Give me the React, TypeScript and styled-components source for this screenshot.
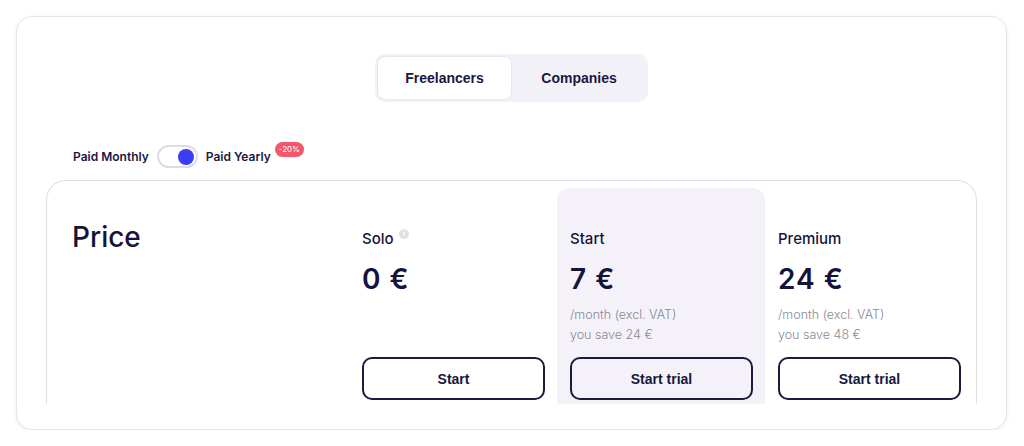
import React from "react";
import styled, { createGlobalStyle } from "styled-components";

const Global = createGlobalStyle`
  html, body { margin: 0; padding: 0; background: #ffffff; }
  body { font-family: Inter, "Noto Sans", sans-serif; color: #16133a; }
  * { box-sizing: border-box; }
`;

const Card = styled.div`
  margin: 16px 17px 0 16px;
  height: 414px;
  border: 1px solid #e6e6ea;
  border-radius: 16px;
  box-shadow: 0 1px 4px rgba(20, 20, 40, 0.07);
  padding: 37px 29px 25px 29px;
  display: flex;
  flex-direction: column;
  background: #fff;
`;

const TabsRow = styled.div`
  display: flex;
  justify-content: center;
`;

const Tabs = styled.div`
  display: flex;
  background: #f3f1f8;
  border-radius: 10px;
  padding: 2px;
  height: 48px;
`;

const Tab = styled.button<{ $active?: boolean }>`
  width: ${(p) => (p.$active ? 135 : 134)}px;
  height: 44px;
  border-radius: 8px;
  border: 1px solid ${(p) => (p.$active ? "#e7e5ee" : "transparent")};
  background: ${(p) => (p.$active ? "#ffffff" : "transparent")};
  font-family: "Liberation Sans", Arial, sans-serif;
  font-weight: 700;
  font-size: 14px;
  color: #1a173f;
  padding: 0;
  cursor: pointer;
`;

const ToggleRow = styled.div`
  display: flex;
  align-items: center;
  height: 25px;
  margin-top: 41px;
  padding-left: 27px;
`;

const ToggleLabel = styled.span`
  font-size: 12px;
  font-weight: 600;
  color: #1a173f;
  line-height: 25px;
  padding-top: 2px;
`;

const Switch = styled.div`
  width: 41px;
  height: 23px;
  margin: 2px 8px 0 8px;
  border: 2px solid #dddce5;
  border-radius: 12px;
  background: #fff;
  display: flex;
  align-items: center;
  justify-content: flex-end;
  padding: 0 2px;
`;

const Knob = styled.span`
  width: 16px;
  height: 16px;
  border-radius: 50%;
  background: #3b3cf6;
`;

const Badge = styled.span`
  align-self: flex-start;
  margin-left: 4px;
  margin-top: -1px;
  background: #f2576b;
  color: #fff;
  font-size: 8px;
  line-height: 15px;
  height: 15px;
  padding: 0 4px;
  border-radius: 8px;
  font-weight: 400;
`;

const Table = styled.div`
  margin-top: 12px;
  flex: 1;
  border: 1px solid #dfdee7;
  border-bottom: none;
  border-radius: 20px 20px 0 0;
  display: grid;
  grid-template-columns: 302px 208px 208px 208px;
  padding-top: 7px;
  overflow: hidden;
`;

const LabelCol = styled.div`
  padding: 32px 0 0 25px;
`;

const PriceTitle = styled.h2`
  margin: 0;
  font-size: 28px;
  line-height: 34px;
  font-weight: 500;
  color: #16133a;
`;

const PlanCol = styled.div<{ $highlight?: boolean }>`
  padding: 40px 12px 0 13px;
  background: ${(p) => (p.$highlight ? "#f4f2f8" : "transparent")};
  border-radius: 12px 12px 0 0;
  display: flex;
  flex-direction: column;
`;

const PlanName = styled.div`
  display: flex;
  align-items: flex-start;
  font-size: 15px;
  line-height: 22px;
  font-weight: 500;
  color: #16133a;
`;

const Info = styled.span`
  width: 10px;
  height: 10px;
  border-radius: 50%;
  background: #e1e0e7;
  color: #fff;
  font-size: 7px;
  line-height: 10px;
  text-align: center;
  font-weight: 700;
  margin: 1px 0 0 5px;
`;

const Amount = styled.div`
  margin-top: 12px;
  font-size: 28px;
  line-height: 34px;
  font-weight: 600;
  letter-spacing: 1px;
  color: #16133a;
`;

const Sub = styled.div`
  margin-top: 9px;
  min-height: 40px;
  font-size: 12.5px;
  line-height: 20px;
  font-weight: 300;
  color: #8a8799;
`;

const CTA = styled.button`
  margin-top: 12px;
  width: 183px;
  height: 43px;
  border: 2px solid #1d1a40;
  border-radius: 10px;
  background: transparent;
  font-family: "Liberation Sans", Arial, sans-serif;
  font-weight: 700;
  font-size: 14px;
  color: #1a173f;
  cursor: pointer;
`;

type Plan = {
  name: string;
  price: string;
  info?: boolean;
  highlight?: boolean;
  lines: string[];
  cta: string;
};

const plans: Plan[] = [
  { name: "Solo", price: "0 €", info: true, lines: [], cta: "Start" },
  {
    name: "Start",
    price: "7 €",
    highlight: true,
    lines: ["/month (excl. VAT)", "you save 24 €"],
    cta: "Start trial",
  },
  {
    name: "Premium",
    price: "24 €",
    lines: ["/month (excl. VAT)", "you save 48 €"],
    cta: "Start trial",
  },
];

export default function App() {
  return (
    <>
      <Global />
      <Card>
        <TabsRow>
          <Tabs>
            <Tab $active>Freelancers</Tab>
            <Tab>Companies</Tab>
          </Tabs>
        </TabsRow>
        <ToggleRow>
          <ToggleLabel>Paid Monthly</ToggleLabel>
          <Switch>
            <Knob />
          </Switch>
          <ToggleLabel>Paid Yearly</ToggleLabel>
          <Badge>-20%</Badge>
        </ToggleRow>
        <Table>
          <LabelCol>
            <PriceTitle>Price</PriceTitle>
          </LabelCol>
          {plans.map((p) => (
            <PlanCol key={p.name} $highlight={p.highlight}>
              <PlanName>
                {p.name}
                {p.info && <Info>i</Info>}
              </PlanName>
              <Amount>{p.price}</Amount>
              <Sub>
                {p.lines.map((l) => (
                  <div key={l}>{l}</div>
                ))}
              </Sub>
              <CTA>{p.cta}</CTA>
            </PlanCol>
          ))}
        </Table>
      </Card>
    </>
  );
}
